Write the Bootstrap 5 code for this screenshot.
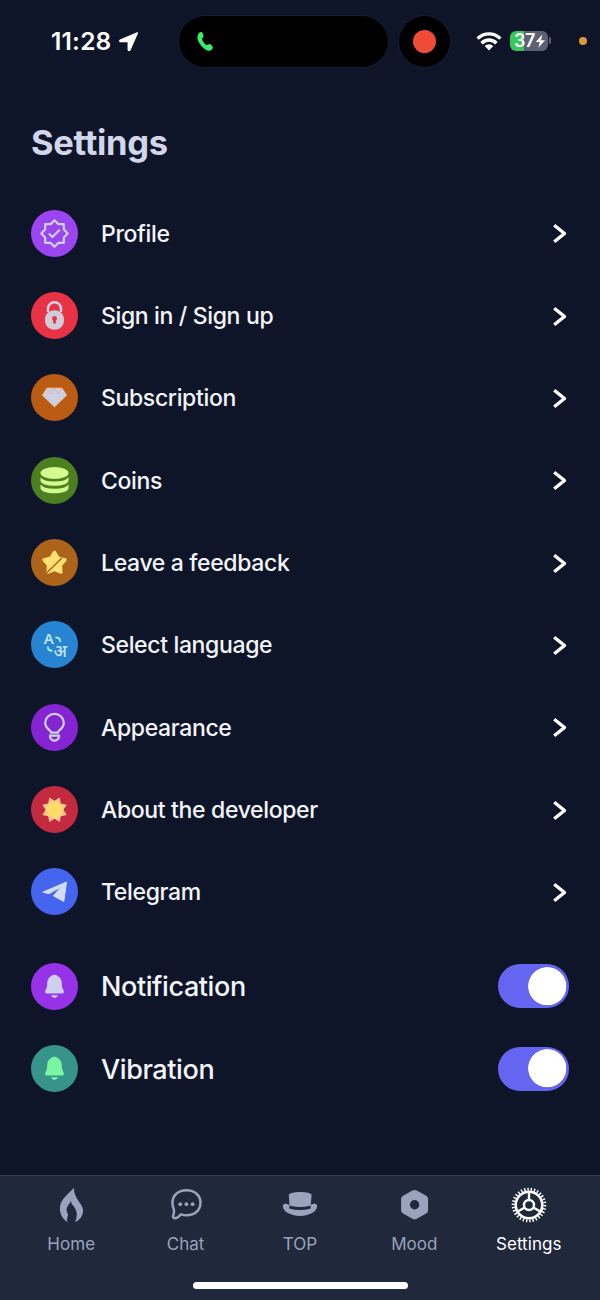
<!DOCTYPE html>
<html lang="en">
<head>
<meta charset="utf-8">
<meta name="viewport" content="width=device-width, initial-scale=1">
<title>Settings</title>
<link href="https://cdn.jsdelivr.net/npm/bootstrap@5.3.0/dist/css/bootstrap.min.css" rel="stylesheet">
<style>
  body { background: #0f1529; color: #f4f5fb; font-family: Inter, "Liberation Sans", sans-serif; }
  .screen { width: 600px; height: 1300px; overflow: hidden; }
  svg { display: block; flex: none; }
  .status-bar { height: 82px; padding: 16px 0 0 51px; }
  .status-bar > * { height: 51px; flex: none; }
  .clock { width: 67px; font-size: 24.5px; font-weight: 600; letter-spacing: .2px; color: #fff; }
  .island { width: 209px; margin-left: 39px; padding-left: 17px; background: #000; box-shadow: 0 0 0 1px #191c30; }
  .record { width: 51px; margin-left: 11px; background: #000; box-shadow: 0 0 0 1px #191c30; }
  .record-dot { width: 23px; height: 23px; background: #f04a38; }
  .signals { margin-left: 26px; padding-bottom: 2px; }
  .battery { width: 38px; height: 20px; margin-left: 8px; border-radius: 6px; background: linear-gradient(90deg, #38c759 14px, #5c6073 14px); font-size: 18px; font-weight: 600; letter-spacing: -.4px; padding-left: 4px; color: #fff; }
  .battery-cap { width: 2px; height: 7px; margin-left: 1px; border-radius: 0 3px 3px 0; background: #5c6073; }
  .mic-dot { width: 8px; height: 8px; margin-left: 28px; background: #e0983c; }
  .page-title { height: 110px; padding: 38px 31px 0; margin: 0; font-size: 34.5px; line-height: 46px; font-weight: 700; letter-spacing: -.3px; color: #d2d6ea; }
  .setting-row { height: 82.35px; padding: 0 31px; background: none; color: inherit; border: 0; }
  .setting-row .label-text { margin-left: 23px; padding-top: 1px; font-size: 23px; line-height: 30px; font-weight: 500; letter-spacing: -.35px; }
  .toggles { margin-top: 12px; }
  .toggles .label-text { font-size: 27px; letter-spacing: -.4px; padding-top: 2px; }
  .bubble { width: 47px; height: 47px; flex: none; }
  .chev { margin-right: 1px; }
  .form-check-input.switch-lg { width: 71px; height: 44px; margin: 0; border: 0; border-radius: 22px; box-shadow: none; background-color: #6466f1; background-size: 38.5px 38.5px; background-position: 30px center; background-image: radial-gradient(circle, #fff 18.7px, transparent 19.4px); background-repeat: no-repeat; }
  .form-check-input.switch-lg:checked { background-color: #6466f1; background-position: 30px center; background-image: radial-gradient(circle, #fff 18.7px, transparent 19.4px); }
  .tab-bar { height: 125px; padding: 11px 14px 0; background: #20283c; border-top: 1px solid #343c50; color: #99a3bc; }
  .tab-bar a { color: inherit; padding: 0; width: 114.4px; font-size: 17px; line-height: 22px; letter-spacing: .05px; }
  .tab-bar a.active { color: #fff; }
  .tab-bar svg { margin-bottom: 10px; }
  .home-bar { width: 215px; height: 7px; background: #fff; margin-top: 27px; }
</style>
</head>
<body>
<div class="screen d-flex flex-column">
  <header class="status-bar d-flex">
    <div class="clock d-flex align-items-center">11:28</div>
    <div class="d-flex align-items-center">
      <svg width="22" height="22" viewBox="0 0 22 22"><path fill="#fff" stroke="#fff" stroke-width="1.5" stroke-linejoin="round" d="M19.300 2 2.200 9.200q-1 1 .3 1.400h7.800v8.200q.6 1.300 1.600.2z"/></svg>
    </div>
    <div class="island rounded-pill d-flex align-items-center">
      <svg width="18" height="24" viewBox="0 0 18 24"><path fill="#36ef66" d="M2.200 4.200C3 2.400 4.600 1.600 5.800 2.200c1 .5 2 3.300 1.700 4.300-.3 1-1.400 1.400-1.400 2.200 0 1.900 2.900 6 4.700 6.300 1 .2 1.600-1 2.700-.9 1.200.1 3.400 2.200 3.300 3.400-.1 1.800-2 3.500-4 3.300C8 20.300 1.300 12 1.400 7.500q0-2 .8-3.300z"/></svg>
    </div>
    <div class="record rounded-circle d-flex align-items-center justify-content-center"><span class="record-dot rounded-circle"></span></div>
    <div class="signals d-flex align-items-center">
      <svg width="26" height="20" viewBox="0 0 26 20"><g fill="none" stroke="#fff" stroke-width="3.400"><path d="M1.600 7.600a16 16 0 0 1 22.800 0"/><path d="M5.600 12.200a10.300 10.300 0 0 1 14.800 0"/></g><path fill="#fff" d="M8.700 15.100a6.200 6.200 0 0 1 8.600 0l-4.300 4.300z"/></svg>
      <div class="battery d-flex align-items-center">37<svg width="11" height="16" viewBox="0 0 11 16"><path fill="#fff" d="M7.300 1.500.8 9h4L3.300 14.800 10 7.200H6z"/></svg></div>
      <span class="battery-cap"></span>
      <span class="mic-dot rounded-circle"></span>
    </div>
  </header>

  <h1 class="page-title">Settings</h1>

  <main class="flex-grow-1">
    <div class="list-group list-group-flush" id="links"></div>
    <div class="toggles" id="toggles"></div>
  </main>

  <nav class="tab-bar">
    <div class="d-flex">
      <a href="#" class="nav-link d-flex flex-column align-items-center">
        <svg width="36" height="36" viewBox="0 0 36 36"><path fill="currentColor" d="M21 .8C15.500 7 6.900 12.500 6.900 21.500c0 5.500 2.500 10 7.500 13.500-1.500-7 3.600-9.500 4-18.500 5.500 6 7 11 3.700 18.500 5-2 8-6.500 8-11.500C30.100 16.500 20.500 12 21 .8z"/><path fill="#20283c" d="M18.200 14c-2 3.500-5 6-4.600 9.500.3 2.400 1.900 3.500 1.900 5.500 2.300-4 3.800-8 2.700-15z"/></svg>Home</a>
      <a href="#" class="nav-link d-flex flex-column align-items-center">
        <svg width="36" height="36" viewBox="0 0 36 36"><path fill="none" stroke="currentColor" stroke-width="2.500" stroke-linejoin="round" d="M18.500 3.200c8.300 0 14 5.300 14 12.600s-5.700 12.500-14 12.500c-2 0-3.600-.3-5.300-1-1.700 1.200-3.200 3.900-6.400 3.900-1.700 0-2.100-1.200-1.600-2.400.9-2.200 1.200-4.300.6-6.400-.8-2.200-1.400-4.300-1.400-6.600 0-7.300 5.800-12.600 14.100-12.600z"/><g fill="currentColor"><circle cx="12.200" cy="17.200" r="1.900"/><circle cx="18.400" cy="17.200" r="1.900"/><circle cx="24.600" cy="17.200" r="1.900"/></g></svg>Chat</a>
      <a href="#" class="nav-link d-flex flex-column align-items-center">
        <svg width="36" height="36" viewBox="0 0 36 36"><g fill="currentColor"><path d="M6.800 8c0-4 22.800-4 22.800 0L28.600 20.200Q18 22.800 7.600 20.200z"/><path d="M1 18.200c1.400-2.200 4.200-1.200 5.800-.6l.6 3.800q10.600 3.200 21.200 0l.6-3.800c1.600-.6 4.400-1.600 5.800.6 1.200 6.600-8.400 10.700-17 10.700S-.2 24.800 1 18.200z"/></g><path fill="none" stroke="#20283c" stroke-width="2.400" d="M8 19.900q10 2.500 20.300 0"/></svg>TOP</a>
      <a href="#" class="nav-link d-flex flex-column align-items-center">
        <svg width="36" height="36" viewBox="0 0 36 36"><path fill="currentColor" fill-rule="evenodd" d="M16.400 3.600q2.200-1.200 4.400 0l9.300 5.100q2 1.100 2 3.300v11.300q0 2.200-2 3.300l-9.300 5.100q-2.200 1.200-4.400 0l-9.300-5.100q-2-1.100-2-3.300V12q0-2.200 2-3.300zM18.600 13a4.700 4.700 0 1 0 0 9.400 4.700 4.700 0 0 0 0-9.400z"/></svg>Mood</a>
      <a href="#" class="nav-link active d-flex flex-column align-items-center">
        <svg width="36" height="36" viewBox="0 0 36 36"><g fill="none" stroke="currentColor"><circle cx="18" cy="18" r="15.800" stroke-width="3" pathLength="120" stroke-dasharray="1.700 2.300"/><circle cx="18" cy="18" r="13.300" stroke-width="2.600"/><circle cx="18" cy="18" r="5" stroke-width="2.400"/><path stroke-width="2.400" d="M18 13V5M13.700 20.500 6.800 24.500M22.300 20.500l6.900 4"/></g></svg>Settings</a>
    </div>
    <div class="home-bar rounded-pill mx-auto"></div>
  </nav>
</div>

<script src="https://cdn.jsdelivr.net/npm/bootstrap@5.3.0/dist/js/bootstrap.bundle.min.js"></script>
<script>
  const pale = '#ccd2ee';
  const bell = c => `<path fill="${c}" d="M23.500 11.800c1.500 0 2.400.7 3.300 1.300 3 1.600 3.900 4.500 4 7.500.1 3 .4 4.800 1.600 6.300 1 1.500.6 3.600-1 3.600H15.600c-1.600 0-2-2.100-1-3.600 1.200-1.500 1.500-3.300 1.600-6.300.1-3 1-5.900 4-7.500.9-.6 1.800-1.300 3.300-1.300zM19.800 32.300h7.400q-1.300 2.700-3.700 2.700t-3.700-2.700z"/>`;
  // star outline: alternating outer and inner points
  const star = (n, R, r, cx, cy, off) => Array.from({length: n * 2}, (_, i) => {
    const a = off + i * Math.PI / n, d = i % 2 ? r : R;
    return (cx + d * Math.sin(a)).toFixed(1) + ',' + (cy - d * Math.cos(a)).toFixed(1);
  }).join(' ');
  const links = [
    ['Profile', '#9b45f0', `<polygon points="${star(8, 13.2, 10.2, 23.5, 23.5, 0)}" fill="none" stroke="${pale}" stroke-width="2.200" stroke-linejoin="round"/><path d="m17.800 23.600 3.600 3.500 7.300-7.300" fill="none" stroke="${pale}" stroke-width="2.100"/>`],
    ['Sign in / Sign up', '#e93345', `<path d="M17 20v-3.200a6.500 6.500 0 0 1 13 0V20" fill="none" stroke="${pale}" stroke-width="2.500"/><path fill="#cfcdd9" fill-rule="evenodd" d="M23.500 18.300c5.500 0 9.500 3.600 9.500 9.400 0 6.300-4 10-9.500 10S14 34 14 27.700c0-5.800 4-9.400 9.500-9.400zM23.500 24a2.500 2.500 0 0 0-1.400 4.600V31.500h2.800v-2.900a2.500 2.500 0 0 0-1.400-4.600z"/>`],
    ['Subscription', '#b95b12', `<path fill="#cfcfe2" stroke="#e9bd83" stroke-width=".8" d="M16 14h15l4.700 7.200L23.500 33 11.300 21.200z"/><path fill="none" stroke="#d8a387" stroke-width=".9" stroke-dasharray="2 1" d="m16 14 3.500 6 4-6 4 6 3.500-6"/>`],
    ['Coins', '#4c7f22', `<g fill="#d5fa8d"><ellipse cx="23.500" cy="16" rx="14" ry="5.900"/><path d="M9.500 20.300q2.500 4.200 14 4.200t14-4.200v3.300c0 7-28 7-28 0zM9.500 27.600q2.500 4.200 14 4.200t14-4.200v3.300c0 7-28 7-28 0z"/></g>`],
    ['Leave a feedback', '#ac641b', `<polygon points="${star(5, 11.2, 6.400, 23.500, 24.200, 0)}" fill="#ffe073" stroke="#ffe073" stroke-width="3" stroke-linejoin="round"/><path d="m15.500 34 15.500-15" stroke="#ac641b" stroke-width="1.500"/>`],
    ['Select language', '#2684d3', `<g fill="#c7e6e8" font-family="'Noto Sans', Inter, sans-serif" font-weight="600"><text x="12.700" y="23" font-size="15">A</text><text x="22.500" y="36" font-size="17" font-weight="500">अ</text></g><path d="M24.500 16.500q4.600-.3 4.900 4.500M16.800 25.500q-.2 4.300 4.500 4.300" fill="none" stroke="#a9edcf" stroke-width="1.900"/>`],
    ['Appearance', '#8424d3', `<g fill="none" stroke="${pale}" stroke-width="2.200"><path d="M20.200 28.600c0-2-6-4-6-9.500a9.300 9.300 0 0 1 18.600 0c0 5.500-6 7.500-6 9.500z"/><path d="M19 31.700h9v1.300q-1.200 3.700-4.500 3.700T19 33z"/></g>`],
    ['About the developer', '#c3293f', `<polygon points="${star(8, 13.2, 9, 23.5, 23.8, Math.PI / 8)}" fill="#f9c58e"/><circle cx="23.500" cy="23.800" r="8" fill="#ffdb68"/>`],
    ['Telegram', '#4665ee', `<path fill="#d0ddec" stroke="#d0ddec" stroke-linejoin="round" d="M35.500 14 32.800 33.500 22.300 27.800 30.500 18.500 18 25.700 11.800 24.200z"/>`]
  ];
  const bubble = (color, art) => `<svg class="bubble" viewBox="0 0 47 47"><circle cx="23.500" cy="23.500" r="23.500" fill="${color}"/>${art}</svg>`;
  document.getElementById('links').innerHTML = links.map(([t, c, a]) =>
    `<a href="#" class="setting-row list-group-item d-flex align-items-center">${bubble(c, a)}<span class="label-text me-auto">${t}</span><svg class="chev" width="16" height="22" viewBox="0 0 16 22"><path fill="none" stroke="#fff" stroke-width="3.400" stroke-linejoin="round" d="m2.200 3.200 10.300 8.300-10.300 8.300"/></svg></a>`).join('');
  document.getElementById('toggles').innerHTML = [
    ['Notification', '#9632e8', bell('#cdd0ea')],
    ['Vibration', '#36948a', bell('#7bf6a0')]
  ].map(([t, c, a]) =>
    `<label class="setting-row d-flex align-items-center">${bubble(c, a)}<span class="label-text me-auto">${t}</span><input type="checkbox" role="switch" class="form-check-input switch-lg" checked></label>`).join('');
</script>
</body>
</html>
